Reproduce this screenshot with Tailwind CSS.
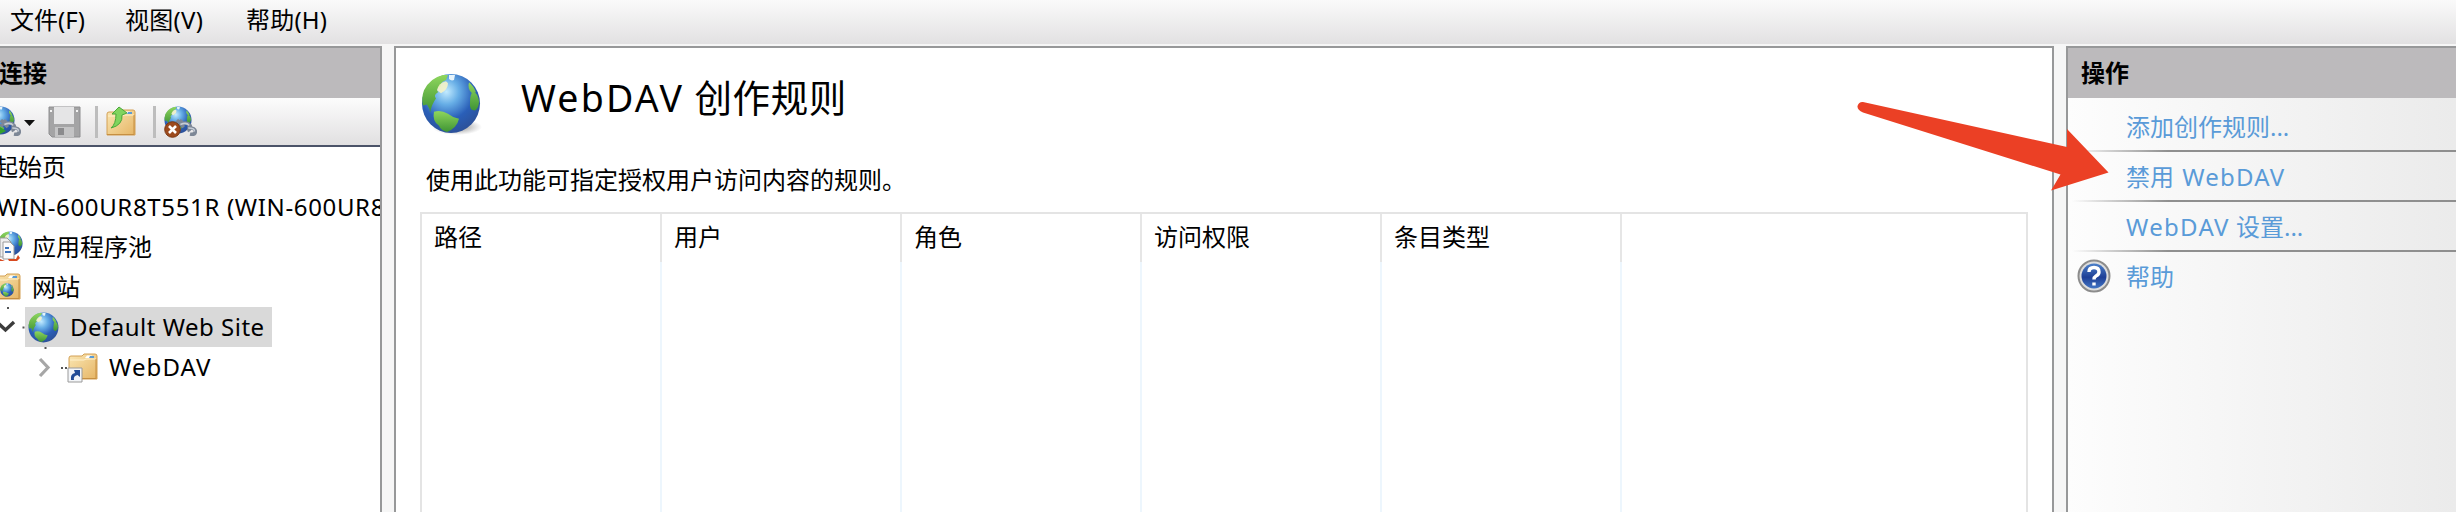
<!DOCTYPE html>
<html lang="zh-CN">
<head>
<meta charset="utf-8">
<title>WebDAV 创作规则</title>
<script src="https://cdn.jsdelivr.net/npm/@tailwindcss/browser@4"></script>
</head>
<body class="w-[2456px] h-[512px] overflow-hidden bg-[#f6f6f6] font-['Noto_Sans','Noto_Sans_CJK_SC',sans-serif] text-[24px] leading-[40px] text-black whitespace-nowrap">
<svg width="0" height="0" class="absolute">
  <defs>
    <radialGradient id="sea" cx=".42" cy=".3" r=".72"><stop offset="0" stop-color="#c3ebff"/><stop offset=".3" stop-color="#67aee6"/><stop offset=".65" stop-color="#2a5fb8"/><stop offset="1" stop-color="#2c5098"/></radialGradient>
    <radialGradient id="shade"><stop offset="0" stop-color="#555" stop-opacity=".75"/><stop offset="1" stop-color="#777" stop-opacity="0"/></radialGradient>
    <linearGradient id="land" x2="0" y2="1"><stop offset="0" stop-color="#8fd65d"/><stop offset="1" stop-color="#3f9434"/></linearGradient>
    <linearGradient id="gold" x2="1" y2="1"><stop offset="0" stop-color="#fae7b4"/><stop offset="1" stop-color="#e6b565"/></linearGradient>
    <linearGradient id="blue" x2="0" y2="1"><stop offset="0" stop-color="#4c80c9"/><stop offset=".55" stop-color="#1e3f96"/><stop offset="1" stop-color="#4275c4"/></linearGradient>
    <symbol id="globe" viewBox="0 0 60 60" preserveAspectRatio="none">
      <circle cx="30" cy="30" r="29" fill="url(#sea)"/>
      <path d="M22 2Q9 5 3 17Q0 25 2 32L6 31Q9 35 9 39Q11 30 15 25Q12 22 17 19Q15 15 20 13Q19 9 25 7L27 2Z" fill="url(#land)"/>
      <path d="M16 17Q17 10 25 8L27 10Q27 16 20 20Z" fill="#f5f3c8" opacity=".9"/>
      <path d="M28 2L34 2L33 7Q30 8 28 6Z" fill="#e7f4fb"/>
      <path d="M48 9Q53 13 55 19L51 20Q46 15 48 9ZM52 18Q57 20 58 28Q58 34 54 37Q48 37 49 29Q49 21 52 18Z" fill="url(#land)"/>
      <path d="M13 38Q20 36 27 40Q32 44 38 45Q36 54 26 58Q20 57 18 52Q11 47 13 38Z" fill="url(#land)"/>
    </symbol>
    <symbol id="folder" viewBox="0 0 30 28">
      <path d="M1 5Q1 3 3 3H14L16 1H27Q29 1 29 3V26H1Z" fill="url(#gold)" stroke="#d3a055"/>
      <path d="M19 2.500H24L22 5H17Z" fill="#fff"/><path d="M22 3H26V5H21Z" fill="#5a9bd5"/>
      <path d="M2 7H16L18 6H28" fill="none" stroke="#fff1cb"/>
      <path d="M28 6V25.500H1" fill="none" stroke="#c68f42"/>
    </symbol>
    <symbol id="plug" viewBox="0 0 24 20">
      <path d="M1 1L9 9M7 1L1 8M5 6Q12 2 16 7Q18 11 13 13M13 10Q23 9 22 15Q21 18 16 17" fill="none" stroke="#7d8796" stroke-width="4"/>
      <path d="M5 6Q12 3 15 7M14 10Q22 10 21 14" fill="none" stroke="#c5ccd6" stroke-width="1.800"/>
    </symbol>
  </defs>
</svg>

<nav class="h-[44px] flex items-center pl-[10px] pb-[5px] bg-linear-to-b from-[#fafafa] to-[#e2e1e2]">
  <span class="w-[115px]">文件(F)</span><span class="w-[121px] tracking-[0.3px]">视图(V)</span><span class="tracking-[0.2px]">帮助(H)</span>
</nav>

<div class="h-[468px] pt-[2px] flex">
  <aside class="w-[382px] h-[466px] overflow-hidden bg-white border-t-2 border-r-2 border-[#979899]">
    <h2 class="h-[50px] -ml-px bg-[#bcbabc] font-bold text-[24px] leading-[50px]">连接</h2>
    <div class="h-[49px] flex items-center border-b-2 border-[#4b5368] bg-linear-to-b from-[#fcfcfc] to-[#e1e0e1]">
      <svg class="w-[36px] h-[34px] shrink-0" viewBox="0 0 36 34"><use href="#globe" x="-14" y="1" width="29" height="29"/><path d="M0 22L6 26L0 29Z" fill="#35a02f"/><use href="#plug" x="0" y="14" width="21" height="18"/><path d="M24 15H35L29.500 21Z" fill="#111"/></svg>
      <svg class="ml-[12px] w-[33px] h-[32px] shrink-0" viewBox="0 0 33 32"><path d="M1 1H32V31H4L1 28Z" fill="#a4a4a5" stroke="#8e8e90"/><path d="M6 1H26V18H6Z" fill="#e5e5e6"/><path d="M7 21H26V31H7Z" fill="#c4c4c5"/><path d="M10 22H16V29H10Z" fill="#8b8b8d"/><path d="M2 4H4V6H2ZM28 4H30V6H28Z" fill="#f4f4f4"/></svg>
      <i class="ml-[14px] w-[3px] h-[32px] shrink-0 bg-[#bdbdbd]"></i>
      <svg class="ml-[8px] w-[30px] h-[32px] shrink-0" viewBox="0 0 30 32"><use href="#folder" y="3" width="30" height="28"/><path d="M5 22Q10 18 10 8L6 8L13 1L21 7L16 9Q17 19 5 22Z" fill="#80d45e" stroke="#4ba83a"/></svg>
      <i class="ml-[17px] w-[3px] h-[32px] shrink-0 bg-[#bdbdbd]"></i>
      <svg class="ml-[8px] w-[34px] h-[34px] shrink-0" viewBox="0 0 34 34"><use href="#globe" x="0" y="1" width="28" height="28"/><use href="#plug" x="12" y="14" width="21" height="18"/><circle cx="8.500" cy="24.500" r="7.800" fill="#9c4a1d" stroke="#7b3712"/><path d="M5 21L12 28M12 21L5 28" stroke="#fff" stroke-width="2.600"/></svg>
    </div>
    <ul>
      <li class="h-[40px] -ml-[6px]">起始页</li>
      <li class="h-[40px] -ml-[3px] tracking-[0.650px]">WIN-600UR8T551R (WIN-600UR8</li>
      <li class="h-[40px] flex items-center">
        <svg class="w-[23px] h-[34px] mr-[9px] shrink-0" viewBox="0 0 23 34"><use href="#globe" x="-2" y="1" width="25" height="25"/><path d="M0 8H7L11 12V27H0Z" fill="#eee" stroke="#999"/><path d="M3 12H10L14 16V29H3Z" fill="#fbfbfb" stroke="#9a9a9a"/><path d="M5 18H9M5 22H11" stroke="#3c72bb" stroke-width="2"/><path d="M0 29L5 31H0ZM8 29H16L18 25L20 28L17 31L9 31Z" fill="#d84a20"/></svg>应用程序池
      </li>
      <li class="h-[40px] flex items-center">
        <svg class="w-[22px] h-[28px] mr-[10px] shrink-0" viewBox="0 0 22 28"><use href="#folder" x="-9" width="30" height="28"/><use href="#globe" x="0" y="10" width="14" height="14"/></svg>网站
      </li>
      <li class="h-[40px] flex items-center">
        <svg class="w-[25px] h-[40px] shrink-0" viewBox="0 0 25 40"><path d="M-3 15L5.500 23L14 15" fill="none" stroke="#3c3c3c" stroke-width="3.400"/><path d="M7 1H9M22.500 20.500H24.500" stroke="#555" stroke-width="2"/></svg>
        <span class="w-[247px] h-[40px] flex items-center bg-[#d9d9d9]"><svg class="ml-[3px] mr-[11px] w-[31px] h-[31px] shrink-0"><use href="#globe" width="31" height="31"/></svg><span class="tracking-[0.500px]">Default Web Site</span></span>
      </li>
      <li class="h-[40px] flex items-center">
        <svg class="w-[98px] h-[40px] mr-[11px] shrink-0" viewBox="0 0 98 40"><path d="M40 12L48 20.500L40 29" fill="none" stroke="#a6a6a6" stroke-width="3.200"/><path d="M44.500 1H46.500M61 21H63M65 21H67" stroke="#555" stroke-width="2"/><use href="#folder" x="68" y="6" width="30" height="28"/><path d="M68 21H82V35H68Z" fill="#f3f5f8" stroke="#9a9a9a"/><path d="M71 33Q70 27 75 26L74 23H80V30L77.500 28Q73 29 74 33Z" fill="#234c96"/></svg><span class="tracking-[1.100px]">WebDAV</span>
      </li>
    </ul>
  </aside>

  <main class="ml-[12px] w-[1660px] h-[466px] border-2 border-b-0 border-[#979899] bg-white">
    <header class="pl-[25px] pt-[23px] h-[108px] flex">
      <svg class="w-[62px] h-[66px] shrink-0" viewBox="0 0 62 66"><ellipse cx="36" cy="56" rx="25" ry="8" fill="url(#shade)"/><use href="#globe" x="0" y="2" width="60" height="61"/></svg>
      <h1 class="ml-[38px] pt-[2px] text-[37.500px] leading-[50px] tracking-[0.600px]"><span class="tracking-[2.200px]">WebDAV</span> 创作规则</h1>
    </header>
    <p class="pl-[30px] h-[56px] leading-[47px]">使用此功能可指定授权用户访问内容的规则。</p>
    <section class="ml-[24px] w-[1608px] h-[300px] flex border-2 border-b-0 border-[#e4e4e4]">
      <div class="w-[240px]"><div class="h-[48px] pl-[12px] leading-[46px] border-r-2 border-[#e6e6e6]">路径</div><div class="h-[252px] border-r-2 border-[#edf6fd]"></div></div>
      <div class="w-[240px]"><div class="h-[48px] pl-[12px] leading-[46px] border-r-2 border-[#e6e6e6]">用户</div><div class="h-[252px] border-r-2 border-[#edf6fd]"></div></div>
      <div class="w-[240px]"><div class="h-[48px] pl-[12px] leading-[46px] border-r-2 border-[#e6e6e6]">角色</div><div class="h-[252px] border-r-2 border-[#edf6fd]"></div></div>
      <div class="w-[240px]"><div class="h-[48px] pl-[12px] leading-[46px] border-r-2 border-[#e6e6e6]">访问权限</div><div class="h-[252px] border-r-2 border-[#edf6fd]"></div></div>
      <div class="w-[240px]"><div class="h-[48px] pl-[12px] leading-[46px] border-r-2 border-[#e6e6e6]">条目类型</div><div class="h-[252px] border-r-2 border-[#edf6fd]"></div></div>
    </section>
  </main>

  <aside class="ml-[12px] w-[390px] h-[466px] border-t-2 border-l-2 border-[#979899] bg-linear-to-r from-[#fdfdfd] to-[#ebebeb]">
    <h2 class="h-[50px] pl-[13px] bg-[#bcbabc] font-bold text-[24px] leading-[50px]">操作</h2>
    <div class="text-[#5a9bd8]">
      <div class="h-[52px] pl-[58px] leading-[57px]">添加创作规则...</div>
      <div class="ml-[4px] h-[2px] bg-linear-to-r from-transparent via-[#8f8f8f] via-25% to-[#8f8f8f]"></div>
      <div class="h-[48px] pl-[58px] leading-[50px]">禁用 <span class="ml-[2px] tracking-[1.200px]">WebDAV</span></div>
      <div class="ml-[4px] h-[2px] bg-linear-to-r from-transparent via-[#8f8f8f] via-25% to-[#8f8f8f]"></div>
      <div class="h-[48px] pl-[58px] leading-[50px]"><span class="tracking-[1.300px]">WebDAV</span> 设置...</div>
      <div class="ml-[4px] h-[2px] bg-linear-to-r from-transparent via-[#8f8f8f] via-25% to-[#8f8f8f]"></div>
      <div class="h-[48px] pl-[9px] flex items-center">
        <svg class="w-[34px] h-[34px] mr-[15px] shrink-0" viewBox="0 0 34 34"><circle cx="17" cy="17" r="15.500" fill="#ddd" stroke="#8c8c8c" stroke-width="2"/><circle cx="17" cy="17" r="12.500" fill="url(#blue)"/><path d="M12 13Q12 8.500 17 8.500T22 13Q22 15.500 19 17Q17 18.200 17 20.500M17 23.500V26.500" fill="none" stroke="#fff" stroke-width="3.400"/></svg><span class="pt-[2px]">帮助</span>
      </div>
    </div>
  </aside>
</div>

<svg class="absolute left-[1850px] top-[95px] w-[265px] h-[100px]" viewBox="1850 95 265 100"><path d="M1863 102L2067 147V129L2108.500 172.500L2051 190.500L2060.500 174.500L1863 112.500Q1857 110 1857.500 106Q1859 101.500 1863 102Z" fill="#eb4025"/></svg>
</body>
</html>
